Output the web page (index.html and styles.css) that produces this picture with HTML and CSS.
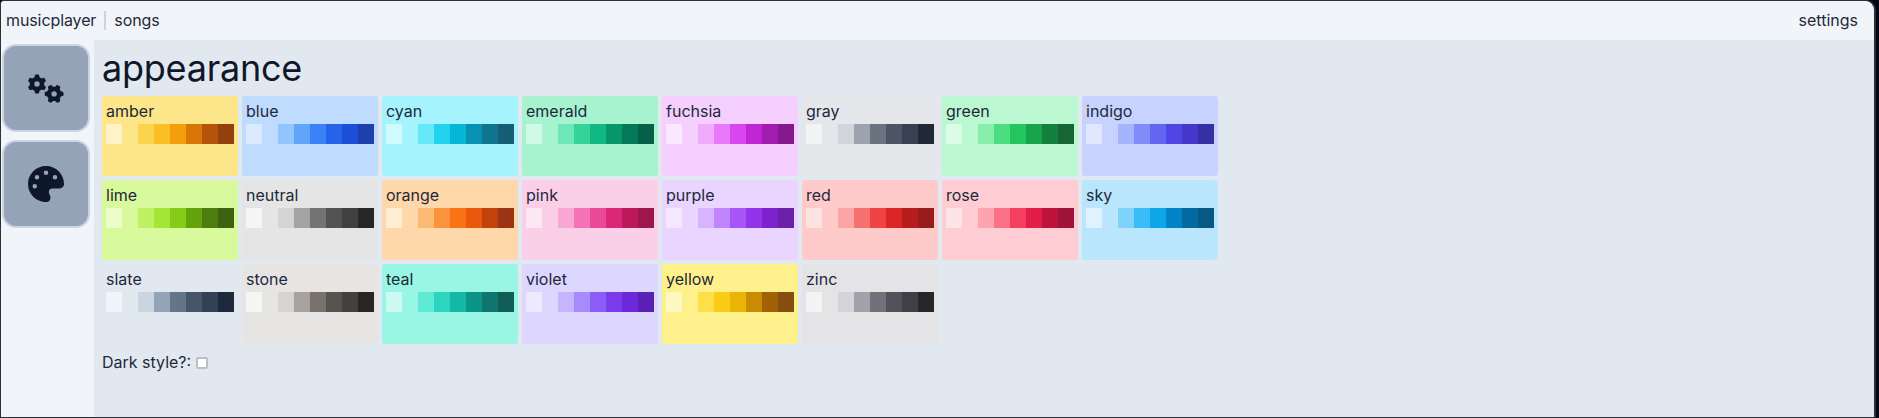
FILE: index.html
```html
<!DOCTYPE html>
<html lang="en">
<head>
<meta charset="utf-8">
<title>musicplayer</title>
<link rel="stylesheet" href="styles.css">
</head>
<body>
<div class="window">
  <header class="topbar">
    <nav class="nav-left">
      <a class="nav-link nav-tight">musicplayer</a>
      <span class="nav-sep"></span>
      <a class="nav-link nav-tight">songs</a>
    </nav>
    <a class="nav-link">settings</a>
  </header>
  <div class="body-row">
    <aside class="sidebar">
      <button class="side-btn" type="button" aria-label="settings">
        <svg class="icon-gears" viewBox="0 0 640 512"><path d="M308.5 135.3c7.1-6.3 9.9-16.2 6.2-25c-2.3-5.3-4.8-10.5-7.6-15.5L304 89.4c-3-5-6.3-9.9-9.8-14.6c-5.7-7.6-15.7-10.1-24.7-7.1l-28.2 9.3c-10.7-8.8-23-16-36.2-20.9L199 27.1c-1.9-9.3-9.1-16.7-18.5-17.8C173.9 8.4 167.2 8 160.4 8h-.7c-6.8 0-13.5 .4-20.1 1.2c-9.4 1.1-16.6 8.6-18.5 17.8L115 56.1c-13.3 5-25.5 12.1-36.2 20.9L50.5 67.8c-9-3-19-.5-24.7 7.1c-3.5 4.7-6.8 9.6-9.9 14.6l-3 5.3c-2.8 5-5.3 10.2-7.6 15.6c-3.7 8.7-.9 18.6 6.2 25l22.2 19.8C32.6 161.9 32 168.9 32 176s.6 14.1 1.7 20.9L11.5 216.7c-7.1 6.3-9.9 16.2-6.2 25c2.3 5.3 4.8 10.5 7.6 15.6l3 5.2c3 5.1 6.3 9.9 9.9 14.6c5.7 7.6 15.7 10.1 24.7 7.1l28.2-9.3c10.7 8.8 23 16 36.2 20.9l6.1 29.1c1.9 9.3 9.1 16.7 18.5 17.8c6.7 .8 13.5 1.2 20.4 1.2s13.7-.4 20.4-1.2c9.4-1.1 16.6-8.6 18.5-17.8l6.1-29.1c13.3-5 25.5-12.1 36.2-20.9l28.2 9.3c9 3 19 .5 24.7-7.1c3.5-4.7 6.8-9.5 9.8-14.6l3.1-5.4c2.8-5 5.3-10.2 7.6-15.5c3.7-8.7 .9-18.6-6.2-25l-22.2-19.8c1.1-6.8 1.7-13.8 1.7-20.9s-.6-14.1-1.7-20.9l22.2-19.8zM112 176a48 48 0 1 1 96 0 48 48 0 1 1 -96 0zM504.7 500.5c6.3 7.1 16.2 9.9 25 6.2c5.3-2.3 10.5-4.8 15.5-7.6l5.4-3.1c5-3 9.9-6.3 14.6-9.8c7.6-5.7 10.1-15.7 7.1-24.7l-9.3-28.2c8.8-10.7 16-23 20.9-36.2l29.1-6.1c9.3-1.9 16.7-9.1 17.8-18.5c.8-6.7 1.2-13.5 1.2-20.4s-.4-13.7-1.2-20.4c-1.1-9.4-8.6-16.6-17.8-18.5L583.9 307c-5-13.3-12.1-25.5-20.9-36.2l9.3-28.2c3-9 .5-19-7.1-24.7c-4.7-3.5-9.6-6.8-14.6-9.9l-5.3-3c-5-2.8-10.2-5.3-15.6-7.6c-8.7-3.7-18.6-.9-25 6.2l-19.8 22.2c-6.8-1.1-13.8-1.7-20.9-1.7s-14.1 .6-20.9 1.7l-19.8-22.2c-6.3-7.1-16.2-9.9-25-6.2c-5.3 2.3-10.5 4.8-15.6 7.6l-5.2 3c-5.1 3-9.9 6.3-14.6 9.9c-7.6 5.7-10.1 15.7-7.1 24.7l9.3 28.2c-8.8 10.7-16 23-20.9 36.2L315.1 313c-9.3 1.9-16.7 9.1-17.8 18.5c-.8 6.7-1.2 13.5-1.2 20.4s.4 13.7 1.2 20.4c1.1 9.4 8.6 16.6 17.8 18.5l29.1 6.1c5 13.3 12.1 25.5 20.9 36.2l-9.3 28.2c-3 9-.5 19 7.1 24.7c4.7 3.5 9.5 6.8 14.6 9.8l5.4 3.1c5 2.8 10.2 5.3 15.5 7.6c8.7 3.7 18.6 .9 25-6.2l19.8-22.2c6.8 1.1 13.8 1.7 20.9 1.7s14.1-.6 20.9-1.7l19.8 22.2zM464 304a48 48 0 1 1 0 96 48 48 0 1 1 0-96z"/></svg>
      </button>
      <button class="side-btn" type="button" aria-label="appearance">
        <svg class="icon-palette" viewBox="0 0 512 512"><path d="M512 256c0 .9 0 1.8 0 2.7c-.4 36.5-33.6 61.3-70.1 61.3H344c-26.5 0-48 21.5-48 48c0 3.4 .4 6.7 1 9.9c2.1 10.2 6.5 20 10.8 29.9c6.1 13.8 12.1 27.5 12.1 42c0 31.8-21.6 60.7-53.4 62c-3.5 .1-7 .2-10.6 .2C114.6 512 0 397.4 0 256S114.6 0 256 0S512 114.6 512 256zM128 288a32 32 0 1 0 -64 0 32 32 0 1 0 64 0zm0-96a32 32 0 1 0 0-64 32 32 0 1 0 0 64zM288 96a32 32 0 1 0 -64 0 32 32 0 1 0 64 0zm96 96a32 32 0 1 0 0-64 32 32 0 1 0 0 64z"/></svg>
      </button>
    </aside>
    <main class="content">
      <h1 class="title">appearance</h1>
      <div class="theme-grid">
        <div class="card amber"><div class="card-name">amber</div><div class="swatches"><i class="s1"></i><i class="s2"></i><i class="s3"></i><i class="s4"></i><i class="s5"></i><i class="s6"></i><i class="s7"></i><i class="s8"></i></div></div>
        <div class="card blue"><div class="card-name">blue</div><div class="swatches"><i class="s1"></i><i class="s2"></i><i class="s3"></i><i class="s4"></i><i class="s5"></i><i class="s6"></i><i class="s7"></i><i class="s8"></i></div></div>
        <div class="card cyan"><div class="card-name">cyan</div><div class="swatches"><i class="s1"></i><i class="s2"></i><i class="s3"></i><i class="s4"></i><i class="s5"></i><i class="s6"></i><i class="s7"></i><i class="s8"></i></div></div>
        <div class="card emerald"><div class="card-name">emerald</div><div class="swatches"><i class="s1"></i><i class="s2"></i><i class="s3"></i><i class="s4"></i><i class="s5"></i><i class="s6"></i><i class="s7"></i><i class="s8"></i></div></div>
        <div class="card fuchsia"><div class="card-name">fuchsia</div><div class="swatches"><i class="s1"></i><i class="s2"></i><i class="s3"></i><i class="s4"></i><i class="s5"></i><i class="s6"></i><i class="s7"></i><i class="s8"></i></div></div>
        <div class="card gray"><div class="card-name">gray</div><div class="swatches"><i class="s1"></i><i class="s2"></i><i class="s3"></i><i class="s4"></i><i class="s5"></i><i class="s6"></i><i class="s7"></i><i class="s8"></i></div></div>
        <div class="card green"><div class="card-name">green</div><div class="swatches"><i class="s1"></i><i class="s2"></i><i class="s3"></i><i class="s4"></i><i class="s5"></i><i class="s6"></i><i class="s7"></i><i class="s8"></i></div></div>
        <div class="card indigo"><div class="card-name">indigo</div><div class="swatches"><i class="s1"></i><i class="s2"></i><i class="s3"></i><i class="s4"></i><i class="s5"></i><i class="s6"></i><i class="s7"></i><i class="s8"></i></div></div>
        <div class="card lime"><div class="card-name">lime</div><div class="swatches"><i class="s1"></i><i class="s2"></i><i class="s3"></i><i class="s4"></i><i class="s5"></i><i class="s6"></i><i class="s7"></i><i class="s8"></i></div></div>
        <div class="card neutral"><div class="card-name">neutral</div><div class="swatches"><i class="s1"></i><i class="s2"></i><i class="s3"></i><i class="s4"></i><i class="s5"></i><i class="s6"></i><i class="s7"></i><i class="s8"></i></div></div>
        <div class="card orange"><div class="card-name">orange</div><div class="swatches"><i class="s1"></i><i class="s2"></i><i class="s3"></i><i class="s4"></i><i class="s5"></i><i class="s6"></i><i class="s7"></i><i class="s8"></i></div></div>
        <div class="card pink"><div class="card-name">pink</div><div class="swatches"><i class="s1"></i><i class="s2"></i><i class="s3"></i><i class="s4"></i><i class="s5"></i><i class="s6"></i><i class="s7"></i><i class="s8"></i></div></div>
        <div class="card purple"><div class="card-name">purple</div><div class="swatches"><i class="s1"></i><i class="s2"></i><i class="s3"></i><i class="s4"></i><i class="s5"></i><i class="s6"></i><i class="s7"></i><i class="s8"></i></div></div>
        <div class="card red"><div class="card-name">red</div><div class="swatches"><i class="s1"></i><i class="s2"></i><i class="s3"></i><i class="s4"></i><i class="s5"></i><i class="s6"></i><i class="s7"></i><i class="s8"></i></div></div>
        <div class="card rose"><div class="card-name">rose</div><div class="swatches"><i class="s1"></i><i class="s2"></i><i class="s3"></i><i class="s4"></i><i class="s5"></i><i class="s6"></i><i class="s7"></i><i class="s8"></i></div></div>
        <div class="card sky"><div class="card-name">sky</div><div class="swatches"><i class="s1"></i><i class="s2"></i><i class="s3"></i><i class="s4"></i><i class="s5"></i><i class="s6"></i><i class="s7"></i><i class="s8"></i></div></div>
        <div class="card slate"><div class="card-name">slate</div><div class="swatches"><i class="s1"></i><i class="s2"></i><i class="s3"></i><i class="s4"></i><i class="s5"></i><i class="s6"></i><i class="s7"></i><i class="s8"></i></div></div>
        <div class="card stone"><div class="card-name">stone</div><div class="swatches"><i class="s1"></i><i class="s2"></i><i class="s3"></i><i class="s4"></i><i class="s5"></i><i class="s6"></i><i class="s7"></i><i class="s8"></i></div></div>
        <div class="card teal"><div class="card-name">teal</div><div class="swatches"><i class="s1"></i><i class="s2"></i><i class="s3"></i><i class="s4"></i><i class="s5"></i><i class="s6"></i><i class="s7"></i><i class="s8"></i></div></div>
        <div class="card violet"><div class="card-name">violet</div><div class="swatches"><i class="s1"></i><i class="s2"></i><i class="s3"></i><i class="s4"></i><i class="s5"></i><i class="s6"></i><i class="s7"></i><i class="s8"></i></div></div>
        <div class="card yellow"><div class="card-name">yellow</div><div class="swatches"><i class="s1"></i><i class="s2"></i><i class="s3"></i><i class="s4"></i><i class="s5"></i><i class="s6"></i><i class="s7"></i><i class="s8"></i></div></div>
        <div class="card zinc"><div class="card-name">zinc</div><div class="swatches"><i class="s1"></i><i class="s2"></i><i class="s3"></i><i class="s4"></i><i class="s5"></i><i class="s6"></i><i class="s7"></i><i class="s8"></i></div></div>
      </div>
      <label class="dark-row">Dark style?:<input class="dark-check" type="checkbox"></label>
    </main>
  </div>
</div>
</body>
</html>
```
FILE: styles.css
```css
* { box-sizing: border-box; }
html, body { height: 100%; }
body {
  margin: 0;
  background: #020617;
  font-family: Inter, "Liberation Sans", sans-serif;
  font-size: 16px;
  line-height: 24px;
  color: #1e293b;
}
.window {
  height: 100%;
  margin-right: 3px;
  display: flex;
  flex-direction: column;
  background: #f1f5f9;
  border: 1px solid #2b3036;
  border-right-width: 2px;
  border-top-right-radius: 10px;
  border-top-left-radius: 4px;
  overflow: hidden;
}
.topbar {
  flex: none;
  height: 39px;
  display: flex;
  align-items: center;
  justify-content: space-between;
  padding: 0 16px 2px 5px;
}
.nav-left { display: flex; align-items: center; }
.nav-link { color: #1e293b; }
.nav-tight { letter-spacing: -0.1px; }
.nav-sep {
  width: 2px;
  height: 19px;
  margin: 2px 8px 0 8px;
  background: #cbd5e1;
}
.body-row { flex: 1; display: flex; min-height: 0; }
.sidebar {
  flex: none;
  width: 93px;
  padding: 6px 5px 0 3px;
  display: flex;
  flex-direction: column;
  gap: 12px;
}
.side-btn {
  width: 84px;
  height: 84px;
  padding: 0;
  border: 0;
  border-radius: 12px;
  background: #94a3b8;
  box-shadow: 0 0 0 2px #cbd5e1;
  display: flex;
  align-items: center;
  justify-content: center;
  color: #0f172a;
}
.side-btn svg { display: block; fill: currentColor; }
.icon-gears { width: 36px; height: 29px; }
.icon-palette { width: 36px; height: 36px; }
.content {
  flex: 1;
  min-width: 0;
  background: #e2e8f0;
  padding: 8px;
}
.title {
  margin: 0 0 8px;
  font-size: 36px;
  line-height: 40px;
  font-weight: 400;
  letter-spacing: -0.24px;
  color: #0f172a;
}
.theme-grid {
  display: grid;
  grid-template-columns: repeat(8, 136px);
  grid-auto-rows: 80px;
  gap: 4px;
}
.card {
  padding: 4px;
  border-radius: 3px;
  background: var(--c2);
}
.card-name { height: 24px; line-height: 22px; }
.swatches { display: flex; }
.swatches i { display: block; width: 16px; height: 20px; }
.s1 { background: var(--c1); }
.s2 { background: var(--c2); }
.s3 { background: var(--c3); }
.s4 { background: var(--c4); }
.s5 { background: var(--c5); }
.s6 { background: var(--c6); }
.s7 { background: var(--c7); }
.s8 { background: var(--c8); }
.dark-row {
  display: flex;
  align-items: center;
  margin-top: 6px;
  height: 24px;
}
.dark-check {
  appearance: none;
  margin: 2px 0 0 5px;
  width: 12px;
  height: 12px;
  border: 2px solid #bcbfc5;
  border-radius: 2px;
  background: #fff;
}

.amber { --c1:#fef3c7; --c2:#fde68a; --c3:#fcd34d; --c4:#fbbf24; --c5:#f59e0b; --c6:#d97706; --c7:#b45309; --c8:#92400e; }
.blue { --c1:#dbeafe; --c2:#bfdbfe; --c3:#93c5fd; --c4:#60a5fa; --c5:#3b82f6; --c6:#2563eb; --c7:#1d4ed8; --c8:#1e40af; }
.cyan { --c1:#cffafe; --c2:#a5f3fc; --c3:#67e8f9; --c4:#22d3ee; --c5:#06b6d4; --c6:#0891b2; --c7:#0e7490; --c8:#155e75; }
.emerald { --c1:#d1fae5; --c2:#a7f3d0; --c3:#6ee7b7; --c4:#34d399; --c5:#10b981; --c6:#059669; --c7:#047857; --c8:#065f46; }
.fuchsia { --c1:#fae8ff; --c2:#f5d0fe; --c3:#f0abfc; --c4:#e879f9; --c5:#d946ef; --c6:#c026d3; --c7:#a21caf; --c8:#86198f; }
.gray { --c1:#f3f4f6; --c2:#e5e7eb; --c3:#d1d5db; --c4:#9ca3af; --c5:#6b7280; --c6:#4b5563; --c7:#374151; --c8:#1f2937; }
.green { --c1:#dcfce7; --c2:#bbf7d0; --c3:#86efac; --c4:#4ade80; --c5:#22c55e; --c6:#16a34a; --c7:#15803d; --c8:#166534; }
.indigo { --c1:#e0e7ff; --c2:#c7d2fe; --c3:#a5b4fc; --c4:#818cf8; --c5:#6366f1; --c6:#4f46e5; --c7:#4338ca; --c8:#3730a3; }
.lime { --c1:#ecfccb; --c2:#d9f99d; --c3:#bef264; --c4:#a3e635; --c5:#84cc16; --c6:#65a30d; --c7:#4d7c0f; --c8:#3f6212; }
.neutral { --c1:#f5f5f5; --c2:#e5e5e5; --c3:#d4d4d4; --c4:#a3a3a3; --c5:#737373; --c6:#525252; --c7:#404040; --c8:#262626; }
.orange { --c1:#ffedd5; --c2:#fed7aa; --c3:#fdba74; --c4:#fb923c; --c5:#f97316; --c6:#ea580c; --c7:#c2410c; --c8:#9a3412; }
.pink { --c1:#fce7f3; --c2:#fbcfe8; --c3:#f9a8d4; --c4:#f472b6; --c5:#ec4899; --c6:#db2777; --c7:#be185d; --c8:#9d174d; }
.purple { --c1:#f3e8ff; --c2:#e9d5ff; --c3:#d8b4fe; --c4:#c084fc; --c5:#a855f7; --c6:#9333ea; --c7:#7e22ce; --c8:#6b21a8; }
.red { --c1:#fee2e2; --c2:#fecaca; --c3:#fca5a5; --c4:#f87171; --c5:#ef4444; --c6:#dc2626; --c7:#b91c1c; --c8:#991b1b; }
.rose { --c1:#ffe4e6; --c2:#fecdd3; --c3:#fda4af; --c4:#fb7185; --c5:#f43f5e; --c6:#e11d48; --c7:#be123c; --c8:#9f1239; }
.sky { --c1:#e0f2fe; --c2:#bae6fd; --c3:#7dd3fc; --c4:#38bdf8; --c5:#0ea5e9; --c6:#0284c7; --c7:#0369a1; --c8:#075985; }
.slate { --c1:#f1f5f9; --c2:#e2e8f0; --c3:#cbd5e1; --c4:#94a3b8; --c5:#64748b; --c6:#475569; --c7:#334155; --c8:#1e293b; }
.stone { --c1:#f5f5f4; --c2:#e7e5e4; --c3:#d6d3d1; --c4:#a8a29e; --c5:#78716c; --c6:#57534e; --c7:#44403c; --c8:#292524; }
.teal { --c1:#ccfbf1; --c2:#99f6e4; --c3:#5eead4; --c4:#2dd4bf; --c5:#14b8a6; --c6:#0d9488; --c7:#0f766e; --c8:#115e59; }
.violet { --c1:#ede9fe; --c2:#ddd6fe; --c3:#c4b5fd; --c4:#a78bfa; --c5:#8b5cf6; --c6:#7c3aed; --c7:#6d28d9; --c8:#5b21b6; }
.yellow { --c1:#fef9c3; --c2:#fef08a; --c3:#fde047; --c4:#facc15; --c5:#eab308; --c6:#ca8a04; --c7:#a16207; --c8:#854d0e; }
.zinc { --c1:#f4f4f5; --c2:#e4e4e7; --c3:#d4d4d8; --c4:#a1a1aa; --c5:#71717a; --c6:#52525b; --c7:#3f3f46; --c8:#27272a; }
```
